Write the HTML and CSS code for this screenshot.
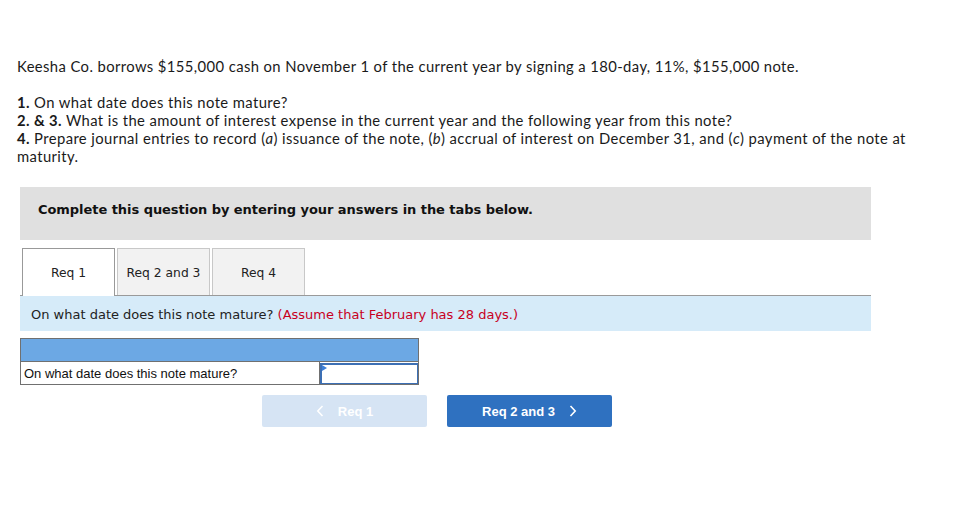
FILE: index.html
```html
<!DOCTYPE html>
<html>
<head>
<meta charset="utf-8">
<link rel="stylesheet" href="styles.css">
</head>
<body>
<div class="page">
  <div class="problem">
    <p class="intro">Keesha Co. borrows $155,000 cash on November 1 of the current year by signing a 180-day, 11%, $155,000 note.</p>
    <p class="reqs"><b>1.</b> On what date does this note mature?<br><b>2. &amp; 3.</b> What is the amount of interest expense in the current year and the following year from this note?<br><b>4.</b> Prepare journal entries to record (<i>a</i>) issuance of the note, (<i>b</i>) accrual of interest on December 31, and (<i>c</i>) payment of the note at<br>maturity.</p>
  </div>
  <div class="card">
    <div class="banner">Complete this question by entering your answers in the tabs below.</div>
    <div class="tabs">
      <div class="tab active">Req 1</div>
      <div class="tab">Req 2 and 3</div>
      <div class="tab">Req 4</div>
    </div>
    <div class="info">On what date does this note mature? <span class="note">(Assume that February has 28 days.)</span></div>
    <table class="grid">
      <tr class="head"><td colspan="2"></td></tr>
      <tr class="row"><td class="label">On what date does this note mature?</td><td class="inputcell"><div class="input"><span class="flag"></span></div></td></tr>
    </table>
    <div class="nav">
      <div class="btn prev"><svg width="8" height="12" viewBox="0 0 8 12"><path d="M6.5 1 L1.8 6 L6.5 11" fill="none" stroke="#fff" stroke-width="1.6"/></svg><span>Req 1</span></div>
      <div class="btn next"><span>Req 2 and 3</span><svg width="8" height="12" viewBox="0 0 8 12"><path d="M1.5 1 L6.2 6 L1.5 11" fill="none" stroke="#fff" stroke-width="1.6"/></svg></div>
    </div>
  </div>
</div>
</body>
</html>
```
FILE: styles.css
```css
html, body { margin: 0; padding: 0; background: #fff; }
.page { padding: 57px 0 0 17px; width: 920px; }
.problem { font-family: "Lato", "Liberation Sans", sans-serif; font-size: 14.8px; letter-spacing: 0.4px; line-height: 18px; color: #1a1a1a; width: 912px; }
.problem p { margin: 0; }
.problem .intro { margin-bottom: 18px; }
.problem b { font-weight: 700; }
.card { margin: 22px 0 0 3px; width: 851px; font-family: "DejaVu Sans", Verdana, sans-serif; }
.banner { background: #e0e0e0; height: 53px; box-sizing: border-box; padding: 15px 0 0 18px; font-size: 13px; font-weight: bold; color: #111; letter-spacing: -0.05px; }
.tabs { display: flex; gap: 2px; margin: 8px 0 0 2px; height: 47px; }
.tab { width: 93px; box-sizing: border-box; border: 1px solid #c8c8c8; border-bottom: none; background: #f2f2f2; font-size: 12.3px; color: #222; display: flex; align-items: center; justify-content: center; padding-top: 1px; }
.tab.active { background: #fff; border-color: #999; position: relative; z-index: 1; margin-bottom: -1px; height: 48px; }
.info { border-top: 1px solid #9a9a9a; background: #d6ebf9; height: 36px; box-sizing: border-box; padding: 11px 0 0 11px; font-size: 13px; color: #222; }
.info .note { color: #c8001e; }
.grid { margin-top: 7px; border-collapse: collapse; width: 399px; font-family: "Liberation Sans", Arial, sans-serif; font-size: 13px; }
.grid td { border: 1px solid #707070; padding: 0; }
.grid .head td { background: #6ca8e4; height: 22px; }
.grid .row td { height: 22px; }
.grid .label { width: 298px; padding-left: 3px; color: #111; }
.grid .inputcell { width: 99px; }
.input { position: relative; height: 18px; border: 1px solid #3c6fb4; border-width: 2px 1px 1px 2px; background: #fff; }
.flag { position: absolute; left: 0; top: 0; width: 0; height: 0; border-top: 3px solid transparent; border-bottom: 3px solid transparent; border-left: 5px solid #3c7fd8; }
.nav { display: flex; gap: 20px; margin: 10px 0 0 242px; }
.btn { width: 165px; height: 32px; border-radius: 2px; display: flex; align-items: center; justify-content: center; gap: 14px; font-family: "Liberation Sans", Arial, sans-serif; font-weight: bold; font-size: 13px; color: #fff; }
.btn.prev { background: #d6e4f4; }
.btn.next { background: #2f71c0; }
```
